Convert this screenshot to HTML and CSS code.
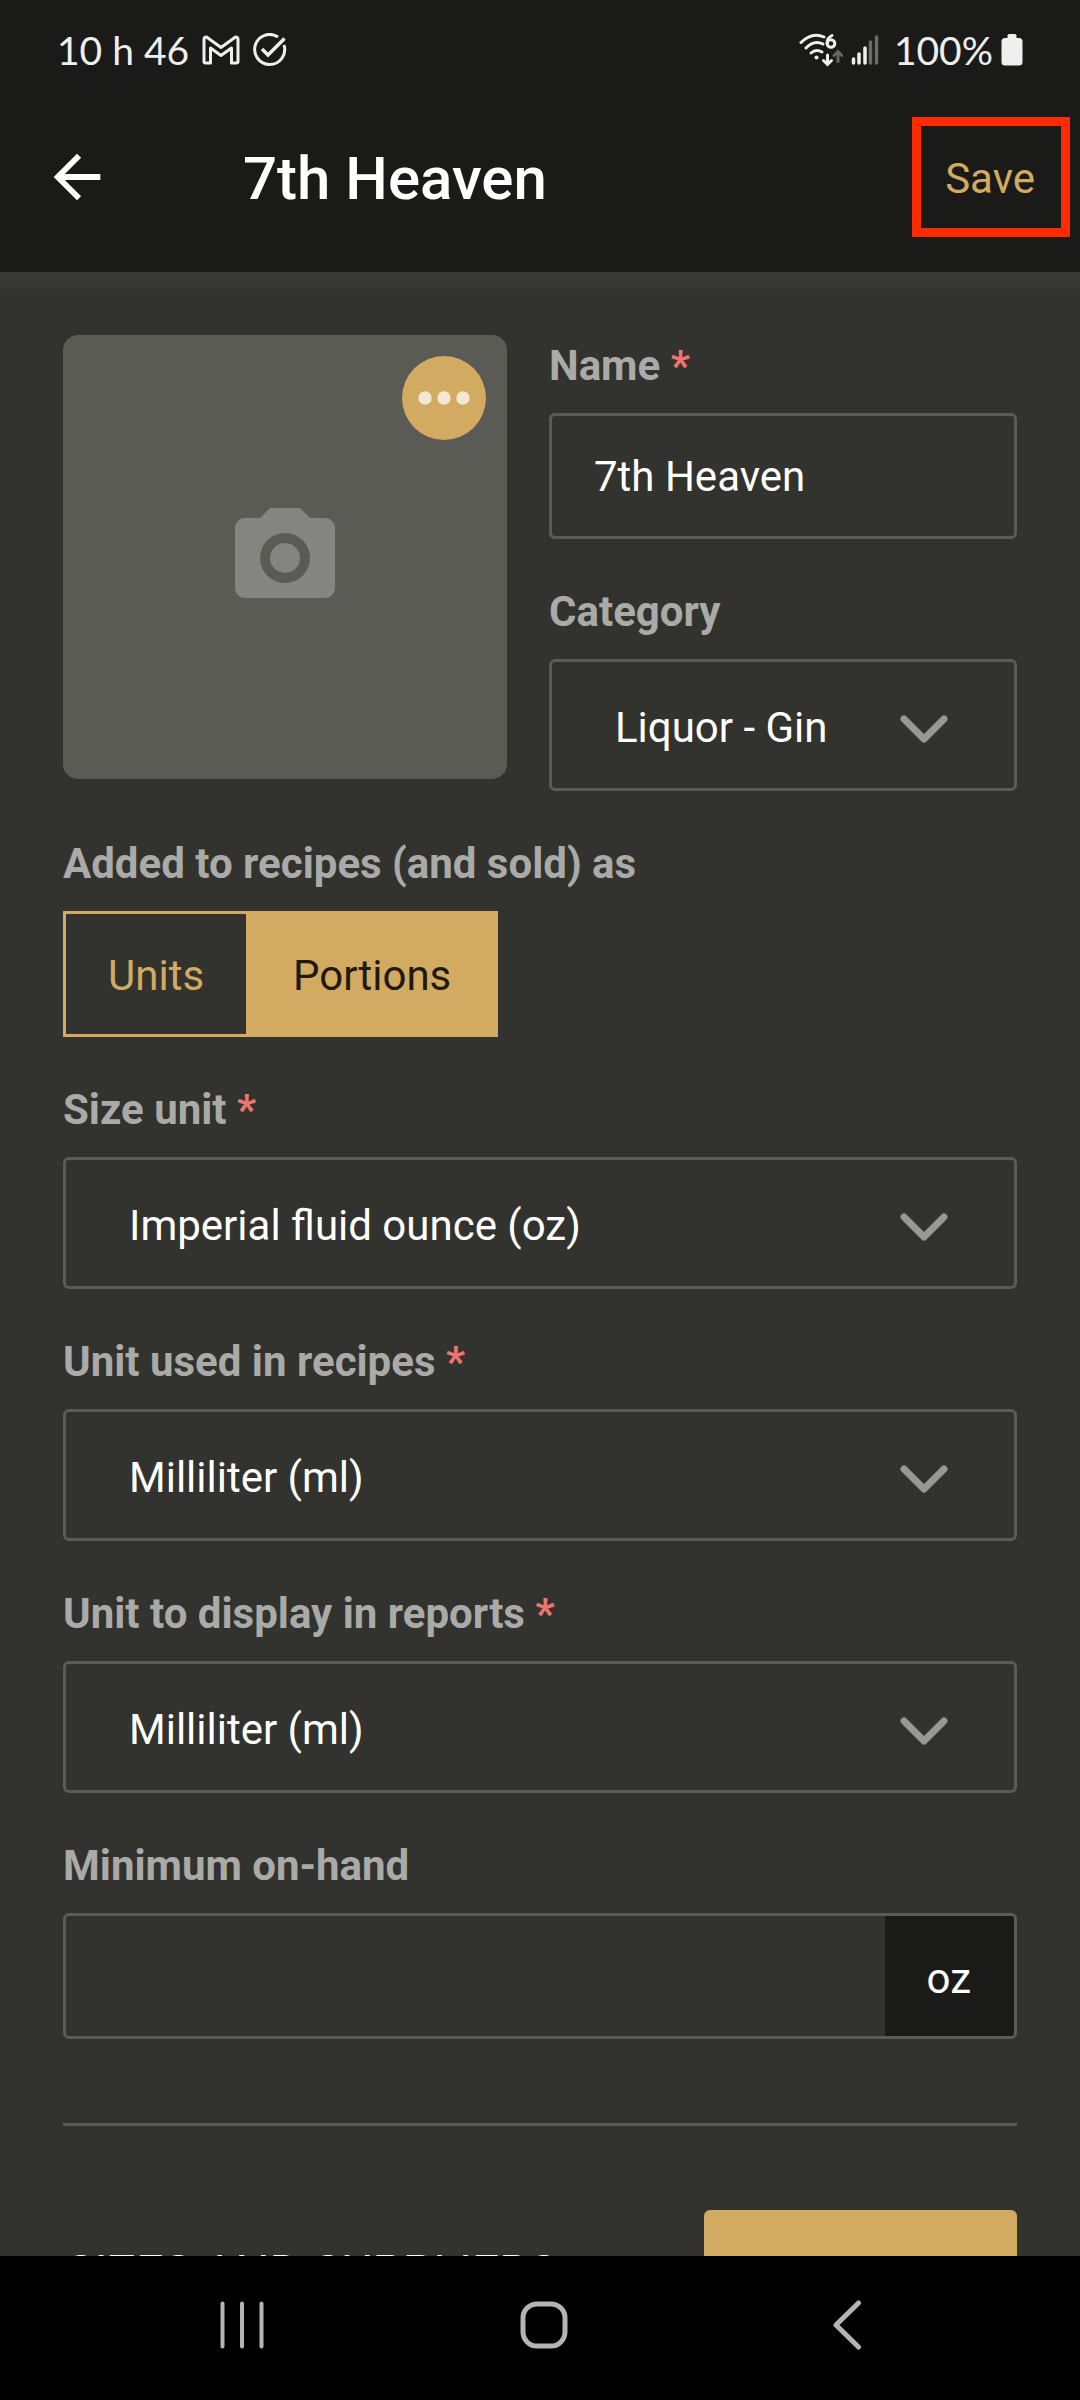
FILE: index.html
```html
<!DOCTYPE html>
<html lang="en">
<head>
<meta charset="utf-8">
<meta name="viewport" content="width=device-width, initial-scale=1">
<title>7th Heaven</title>
<link rel="stylesheet" href="styles.css">
</head>
<body>
<div class="app">
  <header class="top">
    <div class="status">
      <div class="status-group">
        <span class="status-text">10 h 46</span>
        <svg class="icon-mail" viewBox="0 0 38 30" width="38" height="30" aria-hidden="true"><path d="M8.500 28H3.500Q2 28 2 26.500V4.500Q2 2 4.500 2L19 12.500 33.500 2Q36 2 36 4.500V26.500Q36 28 34.500 28H29.500V13L19 20.500 8.500 13Z" fill="none" stroke="currentColor" stroke-width="3" stroke-linejoin="round"/></svg>
        <svg class="icon-check" viewBox="0 0 34 34" width="34" height="34" aria-hidden="true"><g fill="none" stroke="currentColor" stroke-width="3"><path d="M25 4A15 15 0 1 0 31 12"/><path d="M9 16L15 22 31.500 5.500" stroke-width="3.500"/></g></svg>
      </div>
      <div class="status-group status-right">
        <svg class="icon-wifi" viewBox="0 0 44 34" width="44" height="34" aria-hidden="true"><g fill="none" stroke="currentColor" stroke-width="3" stroke-linecap="round"><path d="M2 9.500Q13 -1.500 25 4"/><path d="M7 15Q15 6.500 24 11"/><path d="M12 20Q17 15.500 23 19"/><path d="M33 2.500Q28 5 28 10"/><circle cx="32" cy="10.500" r="3.800"/><path d="M28.500 22V31M24.500 27.500L28.500 31.500 32.500 27.500"/><path d="M39 28.500V19M35 22.500L39 18.500 43 22.500" stroke="#666664"/></g><circle cx="17.500" cy="24.500" r="2" fill="currentColor"/></svg>
        <svg class="icon-signal" viewBox="0 0 28 30" width="28" height="30" aria-hidden="true"><g stroke="currentColor" stroke-width="3.500" stroke-linecap="round"><path d="M2.500 24V28M8 19V28M14 13V28"/><path d="M19.500 7V28M25.500 2V28" stroke="#6a6a68"/></g></svg>
        <span class="status-text battery-level">100%</span>
        <svg class="icon-battery" viewBox="0 0 22 32" width="22" height="32" aria-hidden="true"><path d="M6.500 1.500Q6.500 0 8 0H14Q15.500 0 15.500 1.500V4H18Q21.500 4 21.500 7.500V28Q21.500 31.500 18 31.500H4Q.500 31.500 .500 28V7.500Q.500 4 4 4H6.500Z" fill="currentColor"/></svg>
      </div>
    </div>
    <div class="bar">
      <button class="back" type="button" aria-label="Back"><svg viewBox="0 0 24 24" width="70" height="70"><path d="M20 11H7.830l5.590-5.590L12 4l-8 8 8 8 1.410-1.410L7.830 13H20z" fill="currentColor"/></svg></button>
      <h1 class="title">7th Heaven</h1>
      <button class="save" type="submit" form="product">Save</button>
    </div>
  </header>

  <main class="content">
    <form id="product" class="form">
      <div class="intro">
        <div class="photo">
          <svg class="camera" viewBox="0 0 20 18" width="100" height="90" aria-hidden="true"><circle cx="10" cy="10" r="3" fill="currentColor"/><path fill-rule="evenodd" d="M7 0L5 2H2C.900 2 0 2.900 0 4V16C0 17.100.900 18 2 18H18C19.100 18 20 17.100 20 16V4C20 2.900 19.100 2 18 2H15L13 0ZM10 15A5 5 0 1 1 10 5A5 5 0 0 1 10 15Z" fill="currentColor"/></svg>
          <button class="more" type="button" aria-label="Photo options"><svg viewBox="0 0 52 14" width="52" height="14"><g fill="currentColor"><circle cx="7" cy="7" r="6.700"/><circle cx="26" cy="7" r="6.700"/><circle cx="45" cy="7" r="6.700"/></g></svg></button>
        </div>
        <div class="intro-fields">
          <div class="field">
            <label class="label" for="name">Name <span class="required">*</span></label>
            <input class="box input" id="name" type="text" value="7th Heaven">
          </div>
          <div class="field">
            <label class="label" for="category">Category</label>
            <div class="picker">
              <select class="box select" id="category"><option>Liquor - Gin</option></select>
              <svg class="chevron" viewBox="0 0 48 28" width="48" height="28" aria-hidden="true"><path d="M4 4L24 24 44 4"/></svg>
            </div>
          </div>
        </div>
      </div>

      <fieldset class="field toggle-field">
        <legend class="label">Added to recipes (and sold) as</legend>
        <div class="toggle">
          <button class="toggle-item" type="button" aria-pressed="false">Units</button>
          <button class="toggle-item toggle-on" type="button" aria-pressed="true">Portions</button>
        </div>
      </fieldset>

      <div class="field">
        <label class="label" for="size-unit">Size unit <span class="required">*</span></label>
        <div class="picker">
          <select class="box select" id="size-unit"><option>Imperial fluid ounce (oz)</option></select>
          <svg class="chevron" viewBox="0 0 48 28" width="48" height="28" aria-hidden="true"><path d="M4 4L24 24 44 4"/></svg>
        </div>
      </div>

      <div class="field">
        <label class="label" for="recipe-unit">Unit used in recipes <span class="required">*</span></label>
        <div class="picker">
          <select class="box select" id="recipe-unit"><option>Milliliter (ml)</option></select>
          <svg class="chevron" viewBox="0 0 48 28" width="48" height="28" aria-hidden="true"><path d="M4 4L24 24 44 4"/></svg>
        </div>
      </div>

      <div class="field">
        <label class="label" for="report-unit">Unit to display in reports <span class="required">*</span></label>
        <div class="picker">
          <select class="box select" id="report-unit"><option>Milliliter (ml)</option></select>
          <svg class="chevron" viewBox="0 0 48 28" width="48" height="28" aria-hidden="true"><path d="M4 4L24 24 44 4"/></svg>
        </div>
      </div>

      <div class="field">
        <label class="label" for="minimum">Minimum on-hand</label>
        <div class="box measure">
          <input class="measure-input" id="minimum" type="text" inputmode="decimal">
          <span class="measure-unit">oz</span>
        </div>
      </div>
    </form>

    <section class="sizes">
      <h2 class="sizes-title">SIZES AND SUPPLIERS</h2>
      <button class="add" type="button" aria-label="Add size"></button>
    </section>
  </main>

  <nav class="nav">
    <button class="nav-item" type="button" aria-label="Recent apps"><svg viewBox="0 0 48 50" width="48" height="50"><path d="M4.500 3.500V46.500M24 3.500V46.500M43.500 3.500V46.500" stroke-linecap="round"/></svg></button>
    <button class="nav-item" type="button" aria-label="Home"><svg viewBox="0 0 50 50" width="50" height="50"><rect x="4" y="4" width="42" height="42" rx="14" stroke-width="4.500"/></svg></button>
    <button class="nav-item" type="button" aria-label="Go back"><svg viewBox="0 0 30 50" width="30" height="50"><path d="M26.500 3L4 25 26.500 47" stroke-width="4.500" stroke-linecap="round" stroke-linejoin="round"/></svg></button>
  </nav>
</div>
</body>
</html>
```

FILE: styles.css
```css
:root {
  --bg: #32332e;
  --dark: #1a1b19;
  --line: #5b5c56;
  --gold: #d2aa62;
  --label: #aaaaa8;
  --gutter: 63px;
}

* {
  box-sizing: border-box;
}

body {
  margin: 0;
  background: var(--bg);
  color: #fff;
  font-family: Roboto, "Liberation Sans", sans-serif;
  font-size: 42px;
  line-height: 49px;
}

button,
input,
select {
  margin: 0;
  padding: 0;
  border: 0;
  border-radius: 0;
  background: none;
  color: inherit;
  font: inherit;
}

svg {
  display: block;
  flex: none;
}

.app {
  display: flex;
  flex-direction: column;
  height: 100vh;
}

.top {
  flex: none;
  background: var(--dark);
}

.status {
  display: flex;
  justify-content: space-between;
  align-items: center;
  height: 100px;
  padding: 0 57px;
  color: #efefef;
}

.status-group {
  display: flex;
  align-items: center;
  gap: 13px;
}

.status-right {
  gap: 8px;
}

.status-text {
  font-family: Lato, "Liberation Sans", sans-serif;
  font-size: 39px;
}

.battery-level {
  padding-left: 7px;
}

.bar {
  display: flex;
  align-items: center;
  height: 172px;
  padding: 0 10px 18px 42px;
}

.back {
  flex: none;
}

.title {
  flex: 1;
  margin: 0;
  padding: 4px 0 0 131px;
  font-size: 60px;
  font-weight: 500;
  line-height: 70px;
}

.save {
  height: 120px;
  padding: 2px 26px 0 24px;
  border: 9px solid #ff2a00;
  color: var(--gold);
}

.content {
  flex: 1;
  min-height: 0;
  overflow: hidden;
  padding: 63px var(--gutter) 0;
  background: linear-gradient(#3a3b36, var(--bg) 28px);
}

.form {
  display: flex;
  flex-direction: column;
  gap: 48px;
  padding-bottom: 84px;
  border-bottom: 3px solid var(--line);
}

.intro {
  display: grid;
  grid-template-columns: 444fr 468fr;
  gap: 42px;
  align-items: start;
}

.photo {
  position: relative;
  display: grid;
  place-items: center;
  aspect-ratio: 1;
  border-radius: 15px;
  background: #5a5b55;
  color: #848481;
}

.camera {
  margin-bottom: 8px;
}

.more {
  position: absolute;
  top: 21px;
  right: 21px;
  display: grid;
  place-items: center;
  width: 84px;
  height: 84px;
  border-radius: 50%;
  background: var(--gold);
  color: #f5e8d2;
}

.intro-fields {
  display: flex;
  flex-direction: column;
  gap: 48px;
  padding-top: 6px;
}

.field {
  display: flex;
  flex-direction: column;
  gap: 23px;
  min-width: 0;
  margin: 0;
  padding: 0;
  border: 0;
}

.label {
  padding: 0;
  color: var(--label);
  font-weight: 700;
}

.required {
  color: #ee7470;
}

.box {
  width: 100%;
  height: 126px;
  border: 3px solid var(--line);
  border-radius: 6px;
}

.input {
  padding: 0 42px;
}

.picker {
  display: grid;
  align-items: center;
}

.picker > * {
  grid-area: 1 / 1;
}

.select {
  height: 132px;
  padding: 5px 130px 0 63px;
  appearance: none;
}

.chevron {
  justify-self: end;
  margin: 8px 69px 0 0;
  fill: none;
  stroke: #979795;
  stroke-width: 7px;
  stroke-linecap: round;
  stroke-linejoin: round;
  pointer-events: none;
}

.toggle-field {
  display: block;
}

.toggle {
  display: inline-flex;
  margin-top: 23px;
  vertical-align: top;
  border: 3px solid var(--gold);
}

.toggle-item {
  height: 120px;
  padding: 3px 42px 0;
  color: var(--gold);
}

.toggle-on {
  padding: 3px 44px 0 47px;
  background: var(--gold);
  color: #1f1a0c;
}

.measure {
  display: flex;
  overflow: hidden;
}

.measure-input {
  flex: 1;
  min-width: 0;
  padding: 0 42px;
}

.measure-unit {
  display: grid;
  place-items: center;
  padding: 4px 43px 0 42px;
  background: var(--dark);
}

.sizes {
  display: flex;
  justify-content: space-between;
  align-items: flex-start;
  padding-top: 84px;
}

.sizes-title {
  margin: 0;
  padding: 35px 0 0 3px;
  font-size: 48px;
  font-weight: 400;
  line-height: 56px;
}

.add {
  width: 313px;
  height: 126px;
  border-radius: 6px;
  background: var(--gold);
}

.nav {
  display: grid;
  grid-template-columns: repeat(3, 1fr);
  flex: none;
  height: 144px;
  padding: 0 82px 6px 91px;
  background: #000;
}

.nav-item {
  display: grid;
  place-items: center;
  color: #b4b4b4;
}

.nav-item svg {
  fill: none;
  stroke: currentColor;
  stroke-width: 4px;
}

.nav-item [stroke-width] {
  stroke-width: 5px;
}
```
